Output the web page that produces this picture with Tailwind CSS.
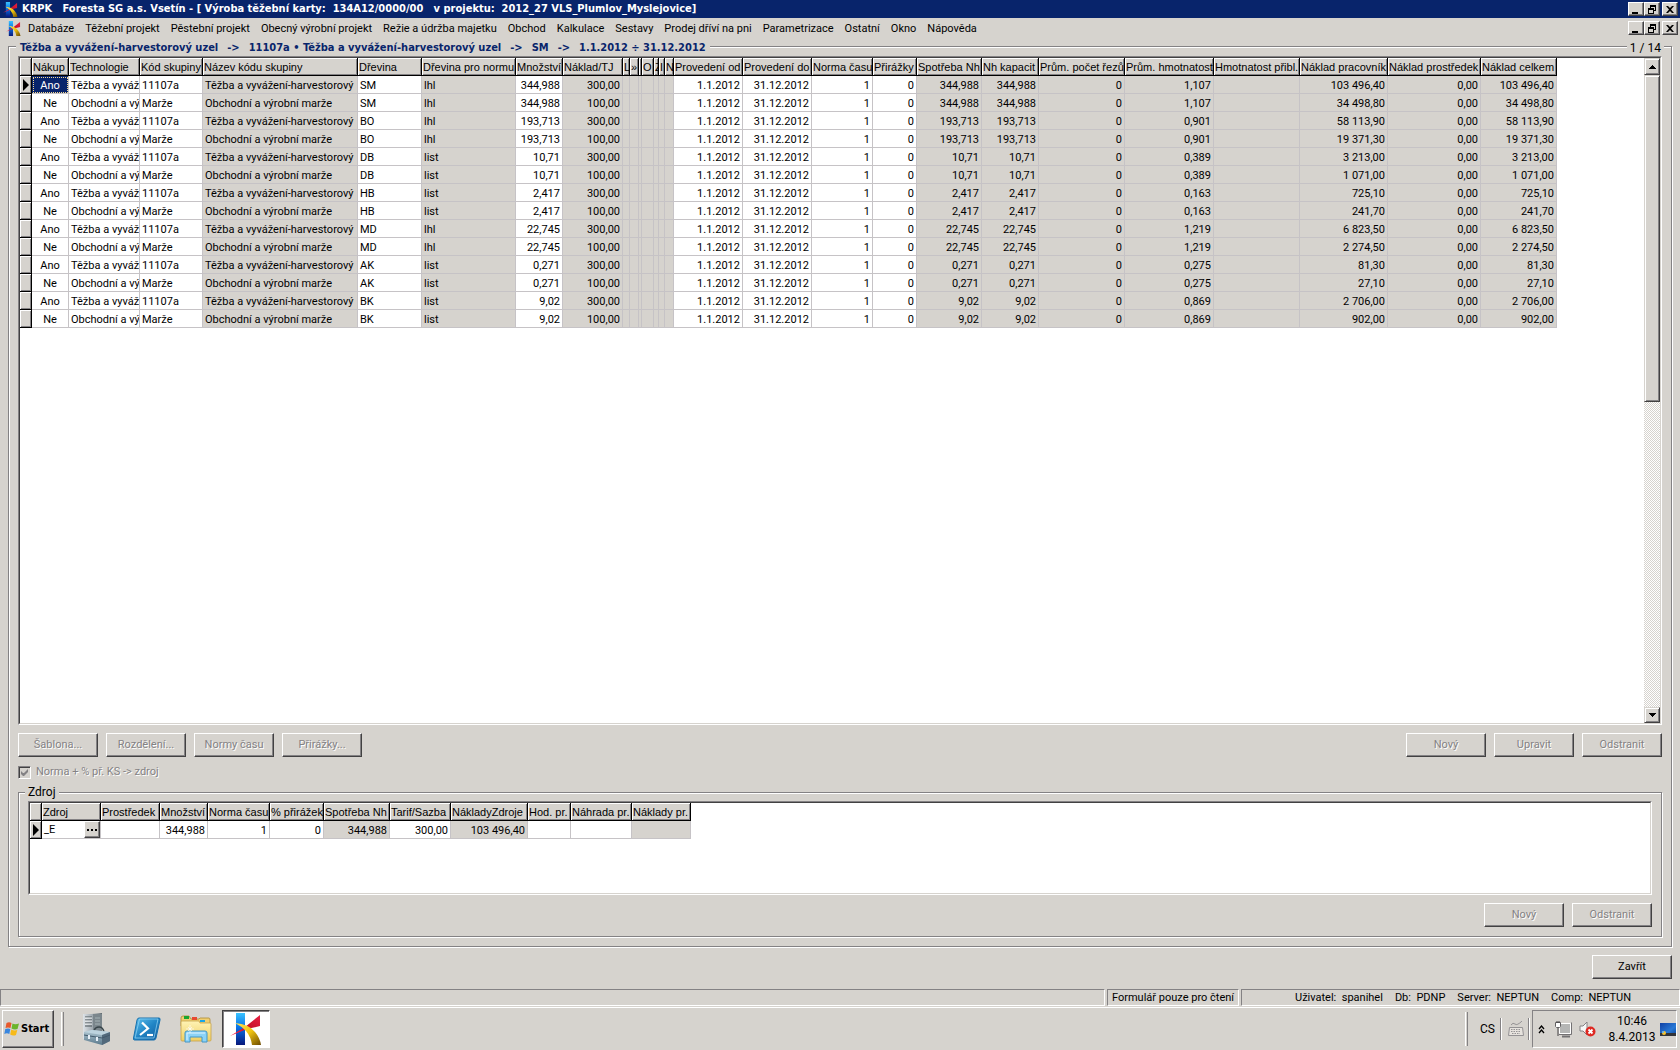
<!DOCTYPE html>
<html lang="cs">
<head>
<meta charset="utf-8">
<title>KRPK Foresta SG a.s. Vsetín</title>
<script src="https://cdn.jsdelivr.net/npm/@tailwindcss/browser@4"></script>
</head>
<body class="flex min-h-screen flex-col bg-[#d6d3ce] font-[Roboto,'Liberation_Sans',sans-serif] text-[11px] leading-[14px] text-black">

<svg class="absolute size-0" aria-hidden="true">
  <defs>
    <linearGradient id="kBlue" x1="0" y1="0" x2="0" y2="1"><stop offset="0" stop-color="#39c3ff"/><stop offset=".45" stop-color="#0871e7"/><stop offset="1" stop-color="#08187b"/></linearGradient>
    <linearGradient id="kRed" x1="0" y1="1" x2="1" y2="0"><stop offset="0" stop-color="#ff2850"/><stop offset=".5" stop-color="#c61029"/><stop offset="1" stop-color="#e72042"/></linearGradient>
    <linearGradient id="kGold" x1="0" y1="0" x2="1" y2="1"><stop offset="0" stop-color="#ffe35a"/><stop offset=".5" stop-color="#efc310"/><stop offset="1" stop-color="#6b4900"/></linearGradient>
    <linearGradient id="psBlue" x1="0" y1="0" x2="1" y2="1"><stop offset="0" stop-color="#63c3ef"/><stop offset=".5" stop-color="#2186c6"/><stop offset="1" stop-color="#10599c"/></linearGradient>
    <linearGradient id="folder" x1="0" y1="0" x2="0" y2="1"><stop offset="0" stop-color="#fff3b5"/><stop offset="1" stop-color="#efcf63"/></linearGradient>
    <linearGradient id="steel" x1="0" y1="0" x2="1" y2="0"><stop offset="0" stop-color="#dee3e7"/><stop offset=".45" stop-color="#a5aeb5"/><stop offset="1" stop-color="#5a656b"/></linearGradient>
    <linearGradient id="box" x1="0" y1="0" x2="0" y2="1"><stop offset="0" stop-color="#b5cbd6"/><stop offset="1" stop-color="#5a798c"/></linearGradient>
    <linearGradient id="screen" x1="0" y1="0" x2="1" y2="1"><stop offset="0" stop-color="#1041a5"/><stop offset=".6" stop-color="#2979d6"/><stop offset="1" stop-color="#084194"/></linearGradient>
    <symbol id="klogo" viewBox="0 0 32 32">
      <rect x="6" y="0" width="9" height="32" fill="url(#kBlue)"/>
      <path d="M30 2v11l-13 3L0 23l15-9z" fill="url(#kRed)"/>
      <path d="M5 10q14 1 20 9 5 6 6 13h-9q-1-8-6-14-5-5-11-8z" fill="url(#kGold)"/>
    </symbol>
  </defs>
</svg>

<!-- title bar -->
<header class="flex h-[18px] items-center bg-[#08246b] pr-[2px] pl-[3px] text-white">
  <svg class="size-[15px]"><use href="#klogo"/></svg>
  <h1 class="ml-1 flex-1 font-['DejaVu_Sans_Condensed',sans-serif] text-[11px] font-bold whitespace-pre">KRPK   Foresta SG a.s. Vsetín - [ Výroba těžební karty:  134A12/0000/00   v projektu:  2012_27 VLS_Plumlov_Myslejovice]</h1>
  <div class="flex" data-window-buttons></div>
</header>

<!-- menu bar -->
<div class="flex h-[21px] items-center pr-[2px] pl-[6px]">
  <svg class="size-[15px]"><use href="#klogo"/></svg>
  <nav class="ml-[7px] flex flex-1 gap-[11px]">
    <a href="#">Databáze</a><a href="#">Těžební projekt</a><a href="#">Pěstební projekt</a><a href="#">Obecný výrobní projekt</a><a href="#">Režie a údržba majetku</a><a href="#">Obchod</a><a href="#">Kalkulace</a><a href="#">Sestavy</a><a href="#">Prodej dříví na pni</a><a href="#">Parametrizace</a><a href="#">Ostatní</a><a href="#">Okno</a><a href="#">Nápověda</a>
  </nav>
  <div class="flex self-start pt-[3px]" data-window-buttons></div>
</div>

<main class="flex flex-1 flex-col px-2 pt-[7px] pb-[10px]">
  <section class="flex flex-1 flex-col border border-[#848284] px-[9px] pb-[9px] shadow-[1px_1px_0_#fff,inset_1px_1px_0_#fff]">
    <div class="-mt-[7px] flex justify-between leading-4">
      <h2 class="-ml-[2px] flex gap-[9px] bg-[#d6d3ce] px-1 font-['DejaVu_Sans_Condensed',sans-serif] text-[11px] font-bold whitespace-nowrap text-[#08246b]"><span>Těžba a vyvážení-harvestorový uzel</span><span>-&gt;</span><span>11107a • Těžba a vyvážení-harvestorový uzel</span><span>-&gt;</span><span>SM</span><span>-&gt;</span><span>1.1.2012 ÷ 31.12.2012</span></h2>
      <span class="-mr-[2px] bg-[#d6d3ce] px-[3px] text-[12px]">1 / 14</span>
    </div>

    <!-- main grid -->
    <div class="flex flex-1 border border-t-[#848284] border-r-white border-b-white border-l-[#848284]">
      <div class="flex min-w-0 flex-1 border border-t-[#424142] border-r-[#d6d3ce] border-b-[#d6d3ce] border-l-[#424142] bg-white">
        <div class="min-w-0 flex-1 overflow-hidden">
          <table id="grid" class="table-fixed border-separate border-spacing-0"></table>
        </div>
        <div class="flex w-4 flex-col bg-[repeating-conic-gradient(#fff_0_25%,#d6d3ce_0_50%)] bg-[length:2px_2px]">
          <button aria-label="Nahoru" class="flex h-[17px] items-center justify-center border border-t-[#d6d3ce] border-r-[#424142] border-b-[#424142] border-l-[#d6d3ce] bg-[#d6d3ce] shadow-[inset_1px_1px_0_#fff,inset_-1px_-1px_0_#848284]"><svg width="7" height="4"><path d="M3 0h1v1h1v1h1v1h1v1H0V3h1V2h1V1h1z"/></svg></button>
          <div class="flex flex-1 flex-col">
            <div class="flex-[51] border border-t-[#d6d3ce] border-r-[#424142] border-b-[#424142] border-l-[#d6d3ce] bg-[#d6d3ce] shadow-[inset_1px_1px_0_#fff,inset_-1px_-1px_0_#848284]"></div>
            <div class="flex-[48]"></div>
          </div>
          <button aria-label="Dolů" class="flex h-4 items-center justify-center border border-t-[#d6d3ce] border-r-[#424142] border-b-[#424142] border-l-[#d6d3ce] bg-[#d6d3ce] shadow-[inset_1px_1px_0_#fff,inset_-1px_-1px_0_#848284]"><svg width="7" height="4"><path d="M0 0h7v1H6v1H5v1H4v1H3V3H2V2H1V1H0z"/></svg></button>
        </div>
      </div>
    </div>

    <div class="mt-2 flex justify-between">
      <div class="flex gap-2">
        <button disabled data-btn>Šablona...</button>
        <button disabled data-btn>Rozdělení...</button>
        <button disabled data-btn>Normy času</button>
        <button disabled data-btn>Přirážky...</button>
      </div>
      <div class="flex gap-2">
        <button disabled data-btn>Nový</button>
        <button disabled data-btn>Upravit</button>
        <button disabled data-btn>Odstranit</button>
      </div>
    </div>

    <label class="mt-2 flex h-[14px] items-center gap-[5px] self-start text-[#848284] [text-shadow:1px_1px_0_#fff]">
      <span class="grid">
        <input type="checkbox" checked disabled class="col-start-1 row-start-1 size-[13px] appearance-none border border-t-[#848284] border-r-white border-b-white border-l-[#848284] bg-[#d6d3ce] shadow-[inset_1px_1px_0_#424142]">
        <svg class="pointer-events-none col-start-1 row-start-1 m-[3px]" width="7" height="7"><path d="M0 2v3l2 2h1l4-4V0L3 4H2z" fill="#848284"/></svg>
      </span>
      Norma + % př. KS -&gt; zdroj
    </label>

    <fieldset class="mt-[6px] min-w-0 border border-[#848284] px-[9px] pb-[9px] shadow-[1px_1px_0_#fff,inset_1px_1px_0_#fff]">
      <legend class="-ml-[3px] bg-[#d6d3ce] px-[3px] text-[12px]">Zdroj</legend>
      <div class="mt-[2px] h-[94px] border border-t-[#848284] border-r-white border-b-white border-l-[#848284]">
        <div class="h-full overflow-hidden border border-t-[#424142] border-r-[#d6d3ce] border-b-[#d6d3ce] border-l-[#424142] bg-white">
          <table id="sources" class="table-fixed border-separate border-spacing-0"></table>
        </div>
      </div>
      <div class="mt-2 flex justify-end gap-2">
        <button disabled data-btn>Nový</button>
        <button disabled data-btn>Odstranit</button>
      </div>
    </fieldset>
  </section>
  <div class="mt-2 flex justify-end"><button data-btn>Zavřít</button></div>
</main>

<!-- status bar -->
<footer class="flex h-[17px] gap-[2px] leading-[15px]">
  <div class="flex-1 border border-t-[#848284] border-r-white border-b-white border-l-[#848284]"></div>
  <div class="w-[132px] border border-t-[#848284] border-r-white border-b-white border-l-[#848284] px-1 whitespace-nowrap">Formulář pouze pro čtení</div>
  <div class="flex w-[439px] gap-3 border border-t-[#848284] border-r-white border-b-white border-l-[#848284] pl-[53px] whitespace-pre"><span>Uživatel:  spanihel</span><span>Db:  PDNP</span><span>Server:  NEPTUN</span><span>Comp:  NEPTUN</span></div>
</footer>

<!-- taskbar -->
<div class="mt-px flex h-[43px] items-center border-t border-white pr-[3px] pl-[2px]">
  <button class="flex h-[38px] w-[52px] items-center gap-px border border-t-white border-r-[#424142] border-b-[#424142] border-l-white px-px font-['DejaVu_Sans_Condensed',sans-serif] text-[11px] font-bold shadow-[inset_-1px_-1px_0_#848284]">
    <svg class="shrink-0" width="16" height="16" viewBox="0 0 16 16"><path d="M2.500 2Q5 .5 7.500 2L6.500 7Q4 5.800 1.500 7z" fill="#e7592c"/><path d="M8.500 2.500Q11 4 15 2.500L13.500 8Q10.500 9 7.500 7.500z" fill="#6bb52c"/><path d="M1.300 8Q4 6.800 6.300 8L5.300 13Q3 11.500.3 13z" fill="#3986de"/><path d="M7.300 8.500Q10 10 13.300 9L12 14Q9 15.300 6.200 13.500z" fill="#f7ba18"/></svg>Start
  </button>
  <div class="ml-[7px] h-[34px] w-[3px] border-r border-l border-r-[#848284] border-l-white bg-[#d6d3ce]"></div>
  <div class="ml-[19px] flex items-center">
    <button aria-label="Správce serveru"><svg width="30" height="32" viewBox="0 0 30 32">
      <path d="M0 1h8l11-1v27l-9 2-10-3z" fill="url(#steel)"/><path d="M10 1h9v26l-9 2z" fill="#7b868c"/>
      <path d="M2 4h7M2 7h7M2 10h7M2 13h7" stroke="#4a5559"/><path d="M2 5h7M2 8h7M2 11h7" stroke="#fff" stroke-opacity=".8"/><path d="M12 5h5M12 8h5M12 11h5" stroke="#a5b2b5"/>
      <path d="M11 18q1-4 5-4t5 5" fill="none" stroke="#39454a" stroke-width="1.500"/>
      <path d="M1 19l8-2 18 2v9l-8 4-18-5z" fill="url(#box)"/><path d="M1 19l8-2 18 2-8 3z" fill="#bdd3de"/><path d="M19 22v10l8-4v-9z" fill="#52697b"/><path d="M1 22l18 3 8-3" fill="none" stroke="#42596b"/><path d="M6 22v4M14 24v4" stroke="#e7eff7" stroke-width="2"/>
    </svg></button>
    <button aria-label="PowerShell" class="ml-5"><svg width="28" height="24" viewBox="0 0 28 24">
      <path d="M6 1h20q1.500 0 1 2l-4 18q-.5 2-2 2H1.500Q0 23 .5 21L4 3q.5-2 2-2z" fill="url(#psBlue)" stroke="#1871ad"/><path d="M6.500 2H25L21 21H2z" fill="none" stroke="#94d7f7" stroke-opacity=".7"/>
      <path d="M9 5.500l6 6-8 6.500" fill="none" stroke="#fff" stroke-width="2.200"/><path d="M14 18h6" stroke="#fff" stroke-width="2.200"/>
    </svg></button>
    <button aria-label="Průzkumník" class="ml-[19px]"><svg width="32" height="30" viewBox="0 0 32 30">
      <path d="M1 4q0-2 2-2h6l2 3h8l1-1h9q1 0 1 2v6H1z" fill="#efcf73" stroke="#ad8a31" stroke-width=".8"/><path d="M4 2h5v3H4z" fill="#18a631"/><path d="M12 3h5v3h-5z" fill="#e74931"/><path d="M20 6h5v2h-5z" fill="#18a6e7"/>
      <path d="M1 8q0-1 1-1h17l1 2h10q1 0 1 1v16q0 1-1 1H2q-1 0-1-1z" fill="url(#folder)" stroke="#c6a24a" stroke-width=".8"/>
      <path d="M5 28V19q0-2 2-2h18q2 0 2 2v9h-5v-5H10v5z" fill="#8cd3f7" stroke="#4296c6"/><path d="M7 19h18M7 19v7" stroke="#def3ff" fill="none"/><path d="M10 11v8M6 15h8M8 13l4 4M12 13l-4 4" stroke="#fff" stroke-opacity=".8" stroke-width=".8"/>
    </svg></button>
    <button aria-label="KRPK" class="ml-[10px] flex h-[38px] w-[48px] items-center justify-center border border-t-[#424142] border-r-white border-b-white border-l-[#424142] bg-white shadow-[inset_1px_1px_0_#848284]"><svg class="h-8 w-8"><use href="#klogo"/></svg></button>
  </div>
  <div class="flex-1"></div>
  <div class="h-[34px] w-[3px] border-r border-l border-r-[#848284] border-l-white"></div>
  <span class="ml-3 text-[12px]">CS</span>
  <div class="ml-[5px] h-[22px] w-[2px] border-l border-l-[#848284] bg-white"></div>
  <svg class="ml-[6px]" width="16" height="16" viewBox="0 0 16 16" fill="none" stroke="#949294"><path d="M.5 14.500l1-8h13l1 8z" fill="#e7e3de"/><path d="M3 8.500h10M3 10.500h10M4 12.500h8" stroke-dasharray="1.500 1"/><path d="M3 4q2-3 4-1t7-3"/></svg>
  <div class="ml-1 h-[22px] w-[2px] border-l border-l-[#848284] bg-white"></div>
  <div class="ml-[2px] flex h-[38px] items-center border border-t-[#848284] border-r-white border-b-white border-l-[#848284] pl-[5px]">
    <svg width="7" height="9" viewBox="0 0 7 9" fill="none" stroke="#000" stroke-width="1.300"><path d="M1 4l2.500-3L6 4M1 8l2.500-3L6 8"/></svg>
    <svg class="ml-[10px]" width="17" height="17" viewBox="0 0 17 17"><path d="M4.500 2.500h11v10h-11z" fill="#b5b6b5" stroke="#fff"/><path d="M4 13.500h12.500v-12" fill="none" stroke="#737173"/><path d="M7 15.500h8" stroke="#737173" stroke-width="2"/><path d="M.5 1.500h5v4l-1 1h-3l-1-1z" fill="#fff" stroke="#636163"/><path d="M2 0v2M4 0v2M3 7v8" stroke="#424142"/></svg>
    <svg class="ml-[7px]" width="17" height="16" viewBox="0 0 17 16"><path d="M1 5h3l4-4v13l-4-4H1z" fill="#f7f7f7" stroke="#848284"/><circle cx="11.500" cy="10.500" r="5" fill="#de2821"/><path d="M9.500 8.500l4 4m0-4l-4 4" stroke="#fff" stroke-width="1.800"/></svg>
    <div class="ml-3 w-12 text-center text-[12px] leading-4"><div>10:46</div><div>8.4.2013</div></div>
    <svg class="ml-1" width="16" height="13"><path d="M0 0h16v13H0z" fill="url(#screen)"/><path d="M0 10h16v3H0z" fill="#313439"/><circle cx="4" cy="10" r="2" fill="#f7c331"/><circle cx="3" cy="9" r="1" fill="#5ab5ff"/></svg>
  </div>
</div>

<script>
const win = 'flex h-[14px] w-4 items-center justify-center border border-t-white border-r-[#424142] border-b-[#424142] border-l-white bg-[#d6d3ce] shadow-[inset_-1px_-1px_0_#848284]';
document.querySelectorAll('[data-window-buttons]').forEach(el => {
  el.innerHTML =
    `<button aria-label="Minimalizovat" class="${win}"><svg width="10" height="9"><path d="M1 7h6v2H1z"/></svg></button>` +
    `<button aria-label="Obnovit" class="${win}"><svg width="10" height="9"><path d="M3 0h6v6H7V5h1V2H4v1H3z"/><path fill-rule="evenodd" d="M1 3h6v6H1zM2 5v3h4V5z"/></svg></button>` +
    `<button aria-label="Zavřít okno" class="${win} ml-[2px]"><svg width="10" height="9"><path d="M1 1h2l2 2 2-2h2L6 4.500 9 8H7L5 6 3 8H1l3-3.500z"/></svg></button>`;
});
document.querySelectorAll('[data-btn]').forEach(b => {
  b.className = 'h-6 w-20 border border-t-white border-r-[#424142] border-b-[#424142] border-l-white bg-[#d6d3ce] shadow-[inset_-1px_-1px_0_#848284] disabled:text-[#848284] disabled:[text-shadow:1px_1px_0_#fff]';
});

const raised = 'h-[18px] overflow-hidden border-r border-b border-black bg-[#d6d3ce] shadow-[inset_1px_1px_0_#fff,inset_-1px_-1px_0_#848284]';
const arrow = '<svg class="mx-auto" width="6" height="12"><path d="M0 0l6 6-6 6z"/></svg>';
const align = { l: 'pl-[2px] text-left', c: 'text-center', r: 'pr-[2px] text-right' };
const fill = { w: 'bg-white', g: 'bg-[#d6d3ce]' };

// columns: [title, width, alignment, fill]
function render(id, cols, rows, special) {
  const total = 12 + cols.reduce((s, c) => s + c[1], 0);
  let h = `<colgroup><col style="width:12px">${cols.map(c => `<col style="width:${c[1]}px">`).join('')}</colgroup>`;
  h += `<thead><tr><th class="${raised}"></th>${cols.map(c => `<th scope="col" class="${raised} pt-px pl-px text-left font-['Liberation_Sans',sans-serif] font-normal whitespace-nowrap">${c[0]}</th>`).join('')}</tr></thead><tbody>`;
  rows.forEach((r, i) => {
    h += `<tr><td class="${raised}">${i ? '' : arrow}</td>` + cols.map((c, j) => special(i, j) ||
      `<td class="h-[18px] overflow-hidden border-r border-b border-[#c6c3c6] pt-[2px] whitespace-nowrap ${align[c[2]]} ${fill[c[3]]}">${r[j] ?? ''}</td>`).join('') + '</tr>';
  });
  const t = document.getElementById(id);
  t.style.width = total + 'px';
  t.innerHTML = h + '</tbody>';
}

const species = [
  ['SM', 'lhl', '344,988', '1,107', '103 496,40', '34 498,80'],
  ['BO', 'lhl', '193,713', '0,901', '58 113,90', '19 371,30'],
  ['DB', 'list', '10,71', '0,389', '3 213,00', '1 071,00'],
  ['HB', 'list', '2,417', '0,163', '725,10', '241,70'],
  ['MD', 'lhl', '22,745', '1,219', '6 823,50', '2 274,50'],
  ['AK', 'list', '0,271', '0,275', '81,30', '27,10'],
  ['BK', 'list', '9,02', '0,869', '2 706,00', '902,00'],
];
const harvest = 'Těžba a vyvážení-harvestorový', margin = 'Obchodní a výrobní marže';
const rows = species.flatMap(([d, n, m, h, a, b]) => [true, false].map(y => {
  const cost = y ? a : b;
  return [y ? 'Ano' : 'Ne', y ? harvest : margin, y ? '11107a' : 'Marže', y ? harvest : margin, d, n, m, y ? '300,00' : '100,00',
    '', '', '', '', '', '', '', '1.1.2012', '31.12.2012', '1', '0', m, m, '0', h, '', cost, '0,00', cost];
}));
render('grid', [
  ['Nákup', 37, 'c', 'w'], ['Technologie', 71, 'l', 'w'], ['Kód skupiny', 63, 'l', 'w'], ['Název kódu skupiny', 155, 'l', 'g'],
  ['Dřevina', 64, 'l', 'w'], ['Dřevina pro normu', 94, 'l', 'g'], ['Množství', 47, 'r', 'w'], ['Náklad/TJ', 60, 'r', 'g'],
  ['L', 7, 'l', 'g'], ['»', 9, 'l', 'g'], ['', 3, 'l', 'g'], ['O', 12, 'l', 'g'], ['Z', 5, 'l', 'g'], ['I', 6, 'l', 'g'], ['N', 9, 'l', 'g'],
  ['Provedení od', 69, 'r', 'w'], ['Provedení do', 69, 'r', 'w'], ['Norma času', 61, 'r', 'w'], ['Přirážky', 44, 'r', 'w'],
  ['Spotřeba Nh', 65, 'r', 'g'], ['Nh kapacit', 57, 'r', 'g'], ['Prům. počet řezů', 86, 'r', 'g'], ['Prům. hmotnatost', 89, 'r', 'g'],
  ['Hmotnatost přibl.', 86, 'r', 'g'], ['Náklad pracovník', 88, 'r', 'g'], ['Náklad prostředek', 93, 'r', 'g'], ['Náklad celkem', 76, 'r', 'g'],
], rows, (i, j) => i === 0 && j === 0 &&
  '<td class="h-[18px] border-r border-b border-[#c6c3c6] bg-[#08246b] pt-[2px] text-center text-white outline-1 -outline-offset-2 outline-dotted outline-[#f7db94]">Ano</td>');

render('sources', [
  ['Zdroj', 59, 'l', 'w'], ['Prostředek', 59, 'l', 'w'], ['Množství', 48, 'r', 'w'], ['Norma času', 62, 'r', 'w'], ['% přirážek', 54, 'r', 'w'],
  ['Spotřeba Nh', 66, 'r', 'g'], ['Tarif/Sazba', 61, 'r', 'w'], ['NákladyZdroje', 77, 'r', 'g'], ['Hod. pr.', 43, 'r', 'w'], ['Náhrada pr.', 61, 'r', 'w'], ['Náklady pr.', 59, 'r', 'g'],
], [['_E', '', '344,988', '1', '0', '344,988', '300,00', '103 496,40']], (i, j) => j === 0 &&
  '<td class="h-[18px] border-r border-b border-[#c6c3c6] bg-white pl-[2px]"><div class="flex h-[17px] items-center justify-between">_E<button aria-label="Vybrat zdroj" class="flex h-[17px] w-4 items-center justify-center border border-t-white border-r-[#424142] border-b-[#424142] border-l-white bg-[#d6d3ce] shadow-[inset_-1px_-1px_0_#848284]"><svg width="10" height="2"><path d="M0 0h2v2H0zM4 0h2v2H4zM8 0h2v2H8z"/></svg></button></div></td>');
</script>
</body>
</html>
